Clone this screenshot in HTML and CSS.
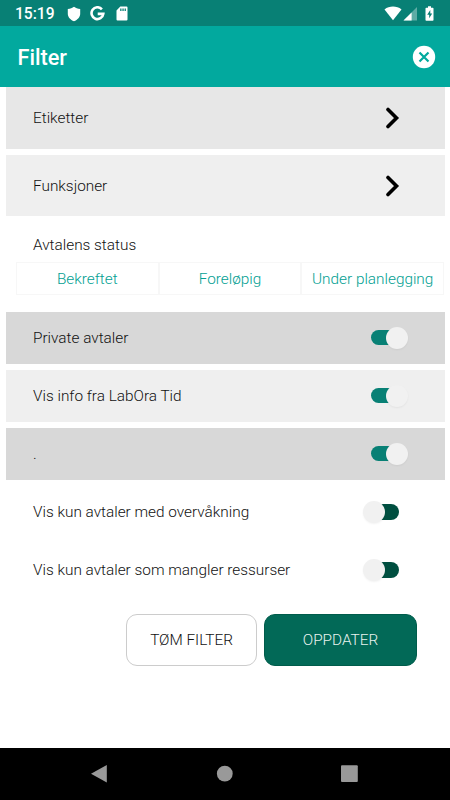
FILE: index.html
```html
<!DOCTYPE html>
<html lang="nb">
<head>
<meta charset="utf-8">
<title>Filter</title>
<link rel="stylesheet" href="styles.css">
</head>
<body>
<div class="statusbar">
  <span class="clock">15:19</span>
  <svg class="shield" width="14" height="16" viewBox="0 0 14 16"><path d="M7 .8C5.500 2 3.200 2.800.8 3v4.700c0 3.200 2.500 6 6.200 7.500 3.700-1.500 6.200-4.300 6.200-7.500V3C10.800 2.800 8.500 2 7 .8z"/></svg>
  <svg class="google" width="15" height="15" viewBox="0 0 15 15"><path class="stroke" d="M11.900 3.300A5.900 5.900 0 1 0 13.300 7.900H7.700"/></svg>
  <svg class="card" width="12" height="15" viewBox="0 0 12 15"><path fill-rule="evenodd" d="M4.300.5h6.200q1 0 1 1v12q0 1-1 1h-9q-1 0-1-1v-9zM4.200 2.500v2.600h1.300V2.500zm2.200 0v2.600h1.300V2.500zm2.200 0v2.600h1.300V2.500z"/></svg>
  <span class="spacer"></span>
  <svg class="wifi" width="18" height="15" viewBox="0 0 18 15"><path d="M.5 3.400C5.300-.4 12.700-.4 17.500 3.400L9 14.300z"/></svg>
  <svg class="signal" width="15" height="14" viewBox="0 0 15 14"><path d="M14 0v13.500H.5z" opacity=".35"/><path d="M8.600 5.400v8.100H.5z"/></svg>
  <svg class="battery" width="9" height="15" viewBox="0 0 9 15"><path fill-rule="evenodd" d="M3 .2h3v1.500h1.700q.8 0 .8.800v11.400q0 .8-.8.800H1.300q-.8 0-.8-.8V2.500q0-.8.800-.8H3zM5.300 4 2.200 8.700h2v3.500l3-4.700H5.300z"/></svg>
</div>
<header class="header">
  <h1>Filter</h1>
  <svg width="24" height="24" viewBox="0 0 24 24"><circle cx="12" cy="12" r="11.200"/><path d="m7.500 7.500 9 9m0-9-9 9"/></svg>
</header>
<main class="filters">
  <div class="row link first"><span>Etiketter</span><svg class="chevron" width="14" height="22" viewBox="0 0 14 22"><path d="m2 2.500 8.500 8.500L2 19.500"/></svg></div>
  <div class="row link"><span>Funksjoner</span><svg class="chevron" width="14" height="22" viewBox="0 0 14 22"><path d="m2 2.500 8.500 8.500L2 19.500"/></svg></div>
  <section class="state">
    <h2>Avtalens status</h2>
    <div class="tabs"><span>Bekreftet</span><span>Foreløpig</span><span>Under planlegging</span></div>
  </section>
  <div class="row dark"><span>Private avtaler</span><i class="switch on"></i></div>
  <div class="row light"><span>Vis info fra LabOra Tid</span><i class="switch on"></i></div>
  <div class="row dark"><span>.</span><i class="switch on"></i></div>
  <div class="row"><span>Vis kun avtaler med overvåkning</span><i class="switch"></i></div>
  <div class="row"><span>Vis kun avtaler som mangler ressurser</span><i class="switch"></i></div>
  <div class="actions"><button>TØM FILTER</button><button class="primary">OPPDATER</button></div>
</main>
<nav class="navbar">
  <svg width="450" height="52" viewBox="0 0 450 52"><path d="M91 25.700 106.800 17v17.600z"/><circle cx="224.800" cy="25.700" r="7.900"/><rect x="341" y="17.300" width="16.800" height="16.800" rx="1"/></svg>
</nav>
</body>
</html>
```
FILE: styles.css
```css
* { box-sizing: border-box; }
body {
  margin: 0;
  height: 800px;
  display: flex;
  flex-direction: column;
  overflow: hidden;
  background: #fff;
  color: #111;
  font: 300 15.350px/20px Roboto, sans-serif;
}
.statusbar {
  height: 26px;
  flex: none;
  display: flex;
  align-items: center;
  padding: 1px 16px 0 15px;
  background: #088075;
  color: #fff;
}
.statusbar svg { fill: #fff; flex: none; }
.statusbar .stroke { fill: none; stroke: #fff; stroke-width: 2.600; }
.clock { width: 52px; font-size: 15.600px; font-weight: 500; line-height: 26px; }
.google { margin-left: 9px; }
.card { margin-left: 11px; }
.spacer { flex: 1; }
.signal { margin-left: 1px; }
.battery { margin-left: 7px; }
.header {
  height: 61px;
  flex: none;
  display: flex;
  align-items: center;
  justify-content: space-between;
  padding: 0 14px 0 17.500px;
  background: #02a99e;
}
.header h1 { margin: 2px 0 0; font-size: 21.700px; line-height: 28px; font-weight: 500; color: #fff; }
.header circle { fill: #fff; }
.header path { fill: none; stroke: #02a99e; stroke-width: 2.200; }
.filters { flex: 1; padding: 0 5px 0 6px; }
.row {
  display: flex;
  align-items: center;
  justify-content: space-between;
  height: 51.500px;
  margin-bottom: 6.600px;
  padding: 0 37px 0 27px;
}
.row.link { height: 61px; margin-bottom: 0; padding-right: 45px; background: #efefef; }
.row.first { height: 62px; margin-bottom: 6px; background: #e7e7e7; }
.row.dark { background: #d8d8d8; }
.row.light { background: #efefef; }
.chevron path { fill: none; stroke: #000; stroke-width: 3.600; stroke-linecap: round; }
.state { height: 96px; padding: 19px 1px 0 10px; }
.state h2 { margin: 0 0 7px 17px; font: inherit; }
.tabs { display: grid; grid-template-columns: repeat(3, 1fr); height: 33px; color: #02a092; }
.tabs span { display: flex; align-items: center; justify-content: center; border: 1px solid #f7f7f7; }
.switch { position: relative; width: 37px; height: 24px; }
.switch::before {
  content: "";
  position: absolute;
  left: 0;
  top: 4px;
  width: 28px;
  height: 15.500px;
  border-radius: 8px;
  background: #004f40;
}
.switch::after {
  content: "";
  position: absolute;
  left: -8px;
  top: 1px;
  width: 22px;
  height: 22px;
  border-radius: 50%;
  background: #f1f1f1;
  box-shadow: 0 1px 2px rgba(0, 0, 0, .05);
}
.switch.on::before { background: #088075; }
.switch.on::after { left: 14.500px; }
.actions { display: flex; gap: 7px; margin: 18px 0 0 120px; }
.actions button {
  width: 131px;
  height: 52px;
  padding: 0;
  border: 1px solid #ccc;
  border-radius: 11px;
  background: #fff;
  color: #111;
  font: inherit;
}
.actions .primary { width: 153px; border-color: #005c4b; background: #026957; color: #e9f3ef; }
.navbar { flex: none; height: 52px; background: #000; }
.navbar svg { display: block; fill: #999; }
```
